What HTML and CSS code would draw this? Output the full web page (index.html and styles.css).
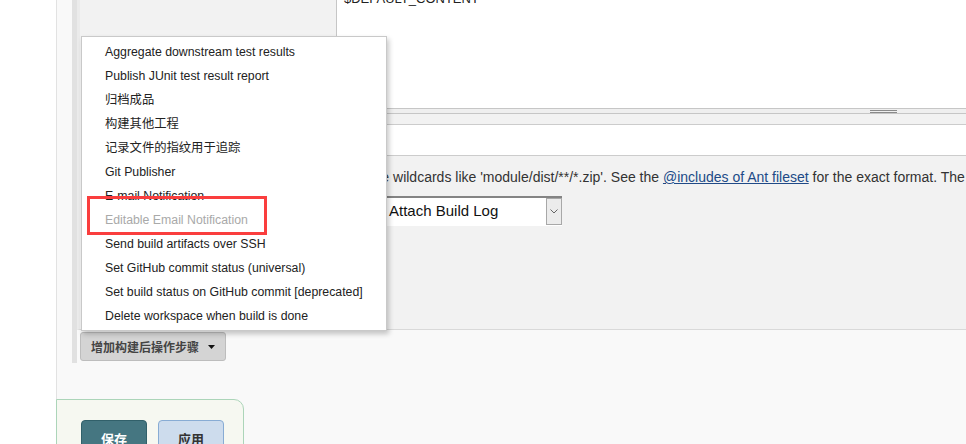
FILE: index.html
```html
<!DOCTYPE html>
<html lang="zh">
<head>
<meta charset="utf-8">
<title>Post-build actions</title>
<link rel="stylesheet" href="styles.css">
</head>
<body>
<div class="page">
  <aside class="side"></aside>
  <main class="main">
    <div class="content">
      <div class="hetero">
        <div class="chunk">
          <div class="row row-textarea">
            <div class="label-col"></div>
            <div class="field-col">
              <div class="textarea">$DEFAULT_CONTENT</div>
              <div class="grip"><span class="grip-mark"></span></div>
            </div>
          </div>
          <div class="row row-input">
            <div class="label-col"></div>
            <div class="field-col"><div class="text-input"></div></div>
          </div>
          <div class="row row-help">
            <div class="label-col"></div>
            <div class="field-col help">Can use wildcards like 'module/dist/**/*.zip'. See the <a href="#">@includes of Ant fileset</a> for the exact format. The base directory is the workspace.</div>
          </div>
          <div class="row row-select">
            <div class="label-col"></div>
            <div class="field-col">
              <div class="select">
                <span class="select-value">Do Not Attach Build Log</span>
                <span class="select-arrow"><svg width="8" height="5" viewBox="0 0 8 5"><path d="M0.5 0.5 L4 4 L7.5 0.5" fill="none" stroke="#666" stroke-width="1"/></svg></span>
              </div>
            </div>
          </div>
        </div>
        <button class="add-btn" type="button"><span>增加构建后操作步骤</span><svg class="caret" width="7" height="4" viewBox="0 0 7 4"><polygon points="0,0 7,0 3.5,4" fill="#111"/></svg></button>
      </div>
      <div class="bottom-bar">
        <button class="btn btn-primary" type="button">保存</button>
        <button class="btn btn-secondary" type="button">应用</button>
      </div>
    </div>
  </main>

  <div class="menu">
    <div class="menu-item">Aggregate downstream test results</div>
    <div class="menu-item">Publish JUnit test result report</div>
    <div class="menu-item">归档成品</div>
    <div class="menu-item">构建其他工程</div>
    <div class="menu-item">记录文件的指纹用于追踪</div>
    <div class="menu-item">Git Publisher</div>
    <div class="menu-item">E-mail Notification</div>
    <div class="menu-item disabled">Editable Email Notification</div>
    <div class="menu-item">Send build artifacts over SSH</div>
    <div class="menu-item">Set GitHub commit status (universal)</div>
    <div class="menu-item">Set build status on GitHub commit [deprecated]</div>
    <div class="menu-item">Delete workspace when build is done</div>
  </div>
  <div class="highlight"></div>
</div>
</body>
</html>
```

FILE: styles.css
```css
html, body {
  margin: 0;
  padding: 0;
}
body {
  width: 966px;
  height: 444px;
  overflow: hidden;
  background: #fff;
  font-family: "Liberation Sans", Arial, "Noto Sans CJK SC", sans-serif;
  color: #333;
}
.page {
  position: relative;
  display: flex;
  width: 966px;
  height: 444px;
  overflow: hidden;
}
.side {
  width: 56px;
  flex: none;
  background: #fff;
}
.main {
  flex: none;
  width: 1500px;
  border-left: 1px solid #e2e2e2;
  background: #f9f9f9;
}
.content {
  margin-top: -13px;
  padding-left: 15px;
}
.hetero {
  border-left: 5px solid #e1e1e1;
  padding-bottom: 2px;
}
.chunk {
  border-left: 3px solid #ebebeb;
  border-bottom: 1px solid #d9d9d9;
  background: #f2f2f2;
  padding-bottom: 103px;
}
.row {
  display: flex;
}
.label-col {
  width: 256px;
  flex: none;
}
.field-col {
  width: 1095px;
  flex: none;
}
.textarea {
  height: 122px;
  box-sizing: border-box;
  background: #fff;
  border: 1px solid #c6c6c6;
  padding: 3px 7px;
  font-size: 13px;
  line-height: 16px;
  color: #222;
}
.grip {
  height: 4px;
  border: 1px solid #c6c6c6;
  border-top: none;
  background: #efefef;
  display: flex;
  justify-content: center;
}
.grip-mark {
  display: block;
  width: 27px;
  height: 1px;
  margin-top: 1px;
  border-top: 1px solid #8a8a8a;
  border-bottom: 1px solid #8a8a8a;
}
.row-input {
  margin-top: 10px;
}
.text-input {
  height: 32px;
  box-sizing: border-box;
  border: 1px solid #cccccc;
  background: #fff;
}
.row-help {
  margin-top: 13px;
}
.help {
  font-size: 14px;
  line-height: 16px;
  padding-left: 1px;
  box-sizing: border-box;
  white-space: nowrap;
  color: #333;
}
.help a {
  color: #204a87;
  text-decoration: underline;
}
.row-select {
  margin-top: 11px;
}
.select {
  width: 226px;
  height: 30px;
  box-sizing: border-box;
  border-top: 2px solid #848484;
  background: #fff;
  display: flex;
  align-items: flex-start;
}
.select-value {
  padding-left: 3px;
  padding-top: 4px;
  font-size: 15px;
  line-height: 17px;
  color: #111;
  white-space: nowrap;
}
.select-arrow {
  margin-left: auto;
  width: 16px;
  height: 27px;
  box-sizing: border-box;
  border: 1px solid #a8a8a8;
  background: #ececec;
  display: flex;
  align-items: center;
  justify-content: center;
}
.add-btn {
  margin: 2px 0 0 3px;
  height: 29px;
  box-sizing: border-box;
  padding: 0 10px;
  border: 1px solid #bdbdbd;
  border-radius: 3px;
  background: #d4d4d4;
  font-family: "Noto Sans CJK SC", sans-serif;
  font-weight: bold;
  font-size: 12px;
  color: #444;
  display: flex;
  align-items: center;
  gap: 9px;
}
.bottom-bar {
  margin-top: 36px;
  margin-left: -16px;
  width: 188px;
  height: 80px;
  box-sizing: border-box;
  border: 1px solid #acd5b9;
  border-radius: 0 10px 0 0;
  background: #f6f8f1;
  padding: 20px 0 0 24px;
  display: flex;
  align-items: flex-start;
  gap: 11px;
}
.btn {
  width: 66px;
  height: 37px;
  box-sizing: border-box;
  border-radius: 4px;
  font-family: "Noto Sans CJK SC", sans-serif;
  font-weight: bold;
  font-size: 13px;
  padding: 0;
}
.btn-primary {
  background: #457681;
  border: 1px solid #31606a;
  color: #fff;
}
.btn-secondary {
  background: #cddced;
  border: 1px solid #88acd4;
  color: #333;
}
.menu {
  position: absolute;
  left: 81px;
  top: 36px;
  width: 306px;
  height: 295px;
  box-sizing: border-box;
  border: 1px solid #c9c9c9;
  background: #fff;
  box-shadow: 2px 3px 5px rgba(0, 0, 0, 0.22);
  padding-top: 3px;
  font-family: "Liberation Sans", Arial, "Noto Sans CJK SC", sans-serif;
}
.menu-item {
  height: 24px;
  line-height: 24px;
  padding-left: 23px;
  font-size: 12.3px;
  color: #222;
  white-space: nowrap;
  overflow: hidden;
}
.menu-item.disabled {
  color: #a9a9a9;
}
.highlight {
  position: absolute;
  left: 87px;
  top: 196px;
  width: 180px;
  height: 39px;
  box-sizing: border-box;
  border: 3px solid #fa3e3e;
}
```
